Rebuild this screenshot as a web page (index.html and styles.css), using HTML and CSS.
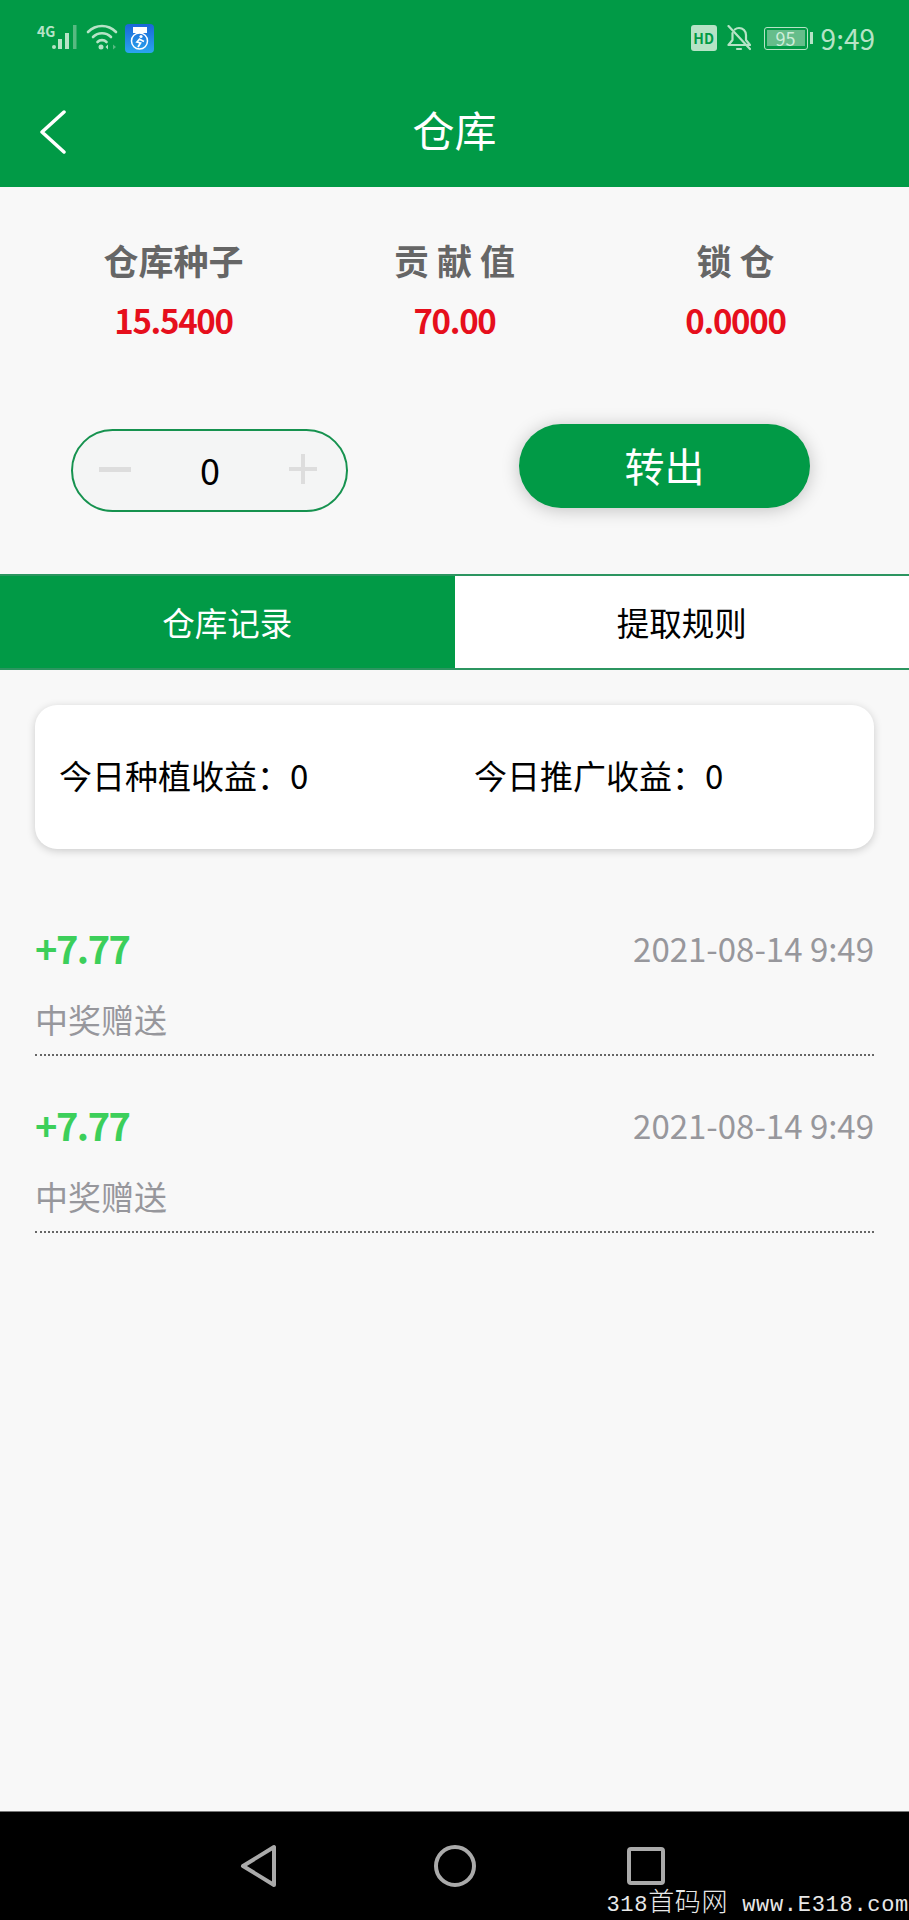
FILE: index.html
```html
<!DOCTYPE html>
<html lang="zh-CN">

<head>
    <meta http-equiv="Content-Type" content="text/html;charset=UTF-8">
    <meta name="viewport" content="width=device-width, initial-scale=1.0">
    <title>仓库</title>
    <link rel="stylesheet" href="styles.css">
</head>

<body>
    <header class="top">
        <div class="status">
            <div class="status-left">
                <span class="net">4G</span>
                <svg class="signal" width="28" height="28" viewBox="0 0 28 28">
                    <circle cx="2" cy="23" r="2" fill="#b6e3c6"/>
                    <rect x="6" y="15" width="4" height="10" fill="#b6e3c6"/>
                    <rect x="13" y="9" width="4" height="16" fill="#b6e3c6"/>
                    <rect x="21" y="1" width="3.500" height="24" fill="#58b981"/>
                </svg>
                <svg class="wifi" width="32" height="28" viewBox="0 0 32 28" fill="none" stroke="#b6e3c6" stroke-width="2.600" stroke-linecap="round">
                    <path d="M2 8C10 0 22 0 30 8"/>
                    <path d="M7 13C12 8 20 8 25 13"/>
                    <path d="M11.500 18C14 15.500 18 15.500 20.500 18"/>
                    <circle cx="15" cy="23" r="2.500" fill="#b6e3c6" stroke="none"/>
                    <path d="M22 20.500V25.500L19.500 23Z" fill="#b6e3c6" stroke="none"/>
                    <path d="M27 20.500V25.500L30 23Z" fill="#58b981" stroke="none"/>
                </svg>
                <svg class="app-icon" width="29" height="29" viewBox="0 0 29 29">
                    <defs>
                        <linearGradient id="appBlue" x1="0" y1="0" x2="0" y2="1">
                            <stop offset="0" stop-color="#1a66d8"/>
                            <stop offset="1" stop-color="#2aa5ee"/>
                        </linearGradient>
                    </defs>
                    <rect width="29" height="29" rx="4" fill="url(#appBlue)"/>
                    <rect x="8" y="3" width="14" height="6" fill="#ffffff"/>
                    <circle cx="14.500" cy="17" r="8" fill="none" stroke="#ffffff" stroke-width="1.500"/>
                    <circle cx="16" cy="12.500" r="1.600" fill="#ffffff"/>
                    <path d="M15 14.500L12 18L15.500 19L13 23M15 15.500L19 17.500" fill="none" stroke="#ffffff" stroke-width="1.800"/>
                </svg>
            </div>
            <div class="status-right">
                <span class="hd">HD</span>
                <svg class="bell" width="24" height="26" viewBox="0 0 24 26" fill="none" stroke="#b6e3c6" stroke-width="2.200" stroke-linecap="round" stroke-linejoin="round">
                    <path d="M8 20H23L19 15V10C19 6 16 3 12 3C10.500 3 9 3.500 7.800 4.500"/>
                    <path d="M5.500 8V15L1.500 20H8"/>
                    <path d="M10 24H14"/>
                    <path d="M1.500 1L23 24"/>
                </svg>
                <div class="battery">
                    <span class="battery-body"><span class="battery-level">95</span></span>
                    <span class="battery-tip"></span>
                </div>
                <span class="time">9:49</span>
            </div>
        </div>
        <div class="titlebar">
            <svg class="back" width="28" height="44" viewBox="0 0 28 44" fill="none" stroke="#ffffff" stroke-width="3.500" stroke-linecap="round" stroke-linejoin="round">
                <path d="M25 2L3 22L25 42"/>
            </svg>
            <h1 class="title">仓库</h1>
        </div>
    </header>

    <main class="content">
        <dl class="stats">
            <div class="stat">
                <dt class="stat-name">仓库种子</dt>
                <dd class="stat-value">15.5400</dd>
            </div>
            <div class="stat">
                <dt class="stat-name">贡 献 值</dt>
                <dd class="stat-value">70.00</dd>
            </div>
            <div class="stat">
                <dt class="stat-name">锁 仓</dt>
                <dd class="stat-value">0.0000</dd>
            </div>
        </dl>

        <div class="actions">
            <div class="stepper">
                <span class="step-sign minus"></span>
                <span class="step-value">0</span>
                <span class="step-sign plus"></span>
            </div>
            <button class="transfer">转出</button>
        </div>

        <div class="tabs">
            <div class="tab tab-active">仓库记录</div>
            <div class="tab">提取规则</div>
        </div>

        <section class="income">
            <span class="income-item">今日种植收益：0</span>
            <span class="income-item">今日推广收益：0</span>
        </section>

        <ul class="records">
            <li class="record">
                <div class="record-top">
                    <span class="record-amount">+7.77</span>
                    <span class="record-date">2021-08-14 9:49</span>
                </div>
                <div class="record-name">中奖赠送</div>
            </li>
            <li class="record">
                <div class="record-top">
                    <span class="record-amount">+7.77</span>
                    <span class="record-date">2021-08-14 9:49</span>
                </div>
                <div class="record-name">中奖赠送</div>
            </li>
        </ul>
    </main>

    <footer class="navbar">
        <svg class="nav-icon nav-back" width="38" height="44" viewBox="0 0 38 44" fill="none" stroke="#aaaaaa" stroke-width="4" stroke-linejoin="round">
            <path d="M34 3V41L3 22Z"/>
        </svg>
        <svg class="nav-icon" width="42" height="42" viewBox="0 0 42 42" fill="none" stroke="#aaaaaa" stroke-width="4">
            <circle cx="21" cy="21" r="19"/>
        </svg>
        <svg class="nav-icon" width="38" height="38" viewBox="0 0 38 38" fill="none" stroke="#aaaaaa" stroke-width="4" stroke-linejoin="round">
            <rect x="2" y="2" width="34" height="34" rx="2"/>
        </svg>
        <span class="watermark">318<span class="watermark-cn">首码网</span> www.E318.com</span>
    </footer>
</body>

</html>
```

FILE: styles.css
```css
* {
    box-sizing: border-box;
}

body {
    margin: 0;
    width: 909px;
    height: 1920px;
    display: flex;
    flex-direction: column;
    background-color: #f8f8f8;
    font-family: "Noto Sans CJK SC", "Noto Sans", sans-serif;
    overflow: hidden;
}

.top {
    height: 187px;
    background-color: #019a46;
    color: #ffffff;
}

.status {
    height: 76px;
    padding: 0 34px 0 37px;
    display: flex;
    justify-content: space-between;
    align-items: center;
}

.status-left,
.status-right {
    display: flex;
    align-items: center;
}

.net {
    width: 15px;
    margin-bottom: 14px;
    font-size: 14px;
    font-weight: 700;
    line-height: 14px;
    color: #b6e3c6;
}

.signal {
    margin-right: 6px;
}

.wifi {
    margin-right: 7px;
}

.hd {
    width: 26px;
    height: 26px;
    margin-right: 10px;
    background-color: #b6e3c6;
    border-radius: 3px;
    color: #019a46;
    font-size: 14px;
    font-weight: 700;
    line-height: 26px;
    text-align: center;
}

.bell {
    margin-right: 13px;
}

.battery {
    display: flex;
    align-items: center;
    margin-right: 8px;
}

.battery-body {
    width: 44px;
    height: 23px;
    padding: 2px;
    border: 1.500px solid #b6e3c6;
    border-radius: 3px;
}

.battery-level {
    display: block;
    height: 16px;
    width: 38px;
    background-color: #66bd8b;
    color: #cdeeda;
    font-size: 18px;
    line-height: 16px;
    text-align: center;
}

.battery-tip {
    width: 3px;
    height: 12px;
    margin-left: 2px;
    background-color: #b6e3c6;
}

.time {
    font-size: 28px;
    line-height: 34px;
    color: #b6e3c6;
}

.titlebar {
    position: relative;
    height: 110px;
    padding-bottom: 5px;
    display: flex;
    justify-content: center;
    align-items: center;
}

.back {
    position: absolute;
    left: 39px;
    top: 34px;
}

.title {
    margin: 0;
    font-size: 42px;
    font-weight: 400;
    line-height: 60px;
}

.content {
    flex: 1;
}

.stats {
    display: grid;
    grid-template-columns: repeat(3, 281px);
    justify-content: center;
    margin: 0;
    padding-top: 48px;
}

.stat {
    text-align: center;
}

.stat-name {
    font-size: 35px;
    font-weight: 700;
    line-height: 50px;
    color: #666666;
}

.stat-value {
    margin: 10px 0 0;
    font-size: 33px;
    font-weight: 700;
    line-height: 50px;
    letter-spacing: -1.300px;
    color: #e60f1c;
}

.actions {
    display: flex;
    align-items: flex-start;
    margin-top: 79px;
    padding-left: 71px;
}

.stepper {
    width: 277px;
    height: 83px;
    margin-top: 5px;
    padding: 0 29px 3px 26px;
    display: flex;
    justify-content: space-between;
    align-items: center;
    background-color: #f4f5f5;
    border: 2.500px solid #16924f;
    border-radius: 42px;
}

.step-sign {
    position: relative;
    width: 32px;
    height: 5px;
    background-color: #dddddd;
}

.plus {
    width: 28px;
    height: 4px;
}

.plus::after {
    content: "";
    position: absolute;
    left: 12px;
    top: -13px;
    width: 4px;
    height: 30px;
    background-color: #dddddd;
}

.step-value {
    font-size: 36px;
    line-height: 50px;
    color: #000000;
}

.transfer {
    width: 291px;
    height: 84px;
    margin-left: 171px;
    padding: 0 0 2px;
    border: none;
    border-radius: 42px;
    background-color: #019a46;
    box-shadow: 0 2px 18px #00000038;
    color: #ffffff;
    font-family: inherit;
    font-size: 40px;
    line-height: 60px;
}

.tabs {
    display: flex;
    height: 96px;
    margin-top: 62px;
    border-top: 2px solid #2c9560;
    border-bottom: 2px solid #2c9560;
}

.tab {
    flex: 1;
    display: flex;
    justify-content: center;
    align-items: center;
    padding-bottom: 2px;
    background-color: #ffffff;
    font-size: 32.500px;
    color: #000000;
}

.tab-active {
    background-color: #019a46;
    color: #ffffff;
}

.income {
    display: grid;
    grid-template-columns: 415px 1fr;
    align-items: center;
    height: 144px;
    margin: 35px 35px 0;
    padding: 0 0 4px 24px;
    background-color: #ffffff;
    border-radius: 22px;
    box-shadow: 0 2px 8px #0000002e;
    font-size: 33px;
    color: #000000;
}

.records {
    list-style: none;
    margin: 30px 35px 0;
    padding: 0;
}

.record {
    height: 177px;
    padding-top: 38px;
    border-bottom: 2px dotted #666666;
}

.record-top {
    display: flex;
    justify-content: space-between;
    align-items: center;
    height: 60px;
}

.record-amount {
    font-size: 38px;
    font-weight: 700;
    letter-spacing: -1.500px;
    color: #3ccf5a;
}

.record-date {
    margin-top: 1px;
    font-size: 33px;
    color: #97979c;
}

.record-name {
    margin-top: 18px;
    font-size: 33px;
    line-height: 48px;
    color: #97979c;
}

.navbar {
    position: relative;
    height: 109px;
    display: grid;
    grid-template-columns: repeat(3, 191px);
    justify-content: center;
    justify-items: center;
    align-items: center;
    background-color: #000000;
    border-top: 1px solid #777777;
}

.nav-back {
    margin-right: 10px;
}

.watermark {
    position: absolute;
    right: 0;
    bottom: 0;
    font-family: "Liberation Mono", monospace;
    font-size: 22px;
    line-height: 28px;
    letter-spacing: 0.700px;
    white-space: pre;
    color: #e8e8e8;
}

.watermark-cn {
    font-family: "Noto Sans CJK SC", sans-serif;
    font-size: 26px;
    font-weight: 300;
}
```
